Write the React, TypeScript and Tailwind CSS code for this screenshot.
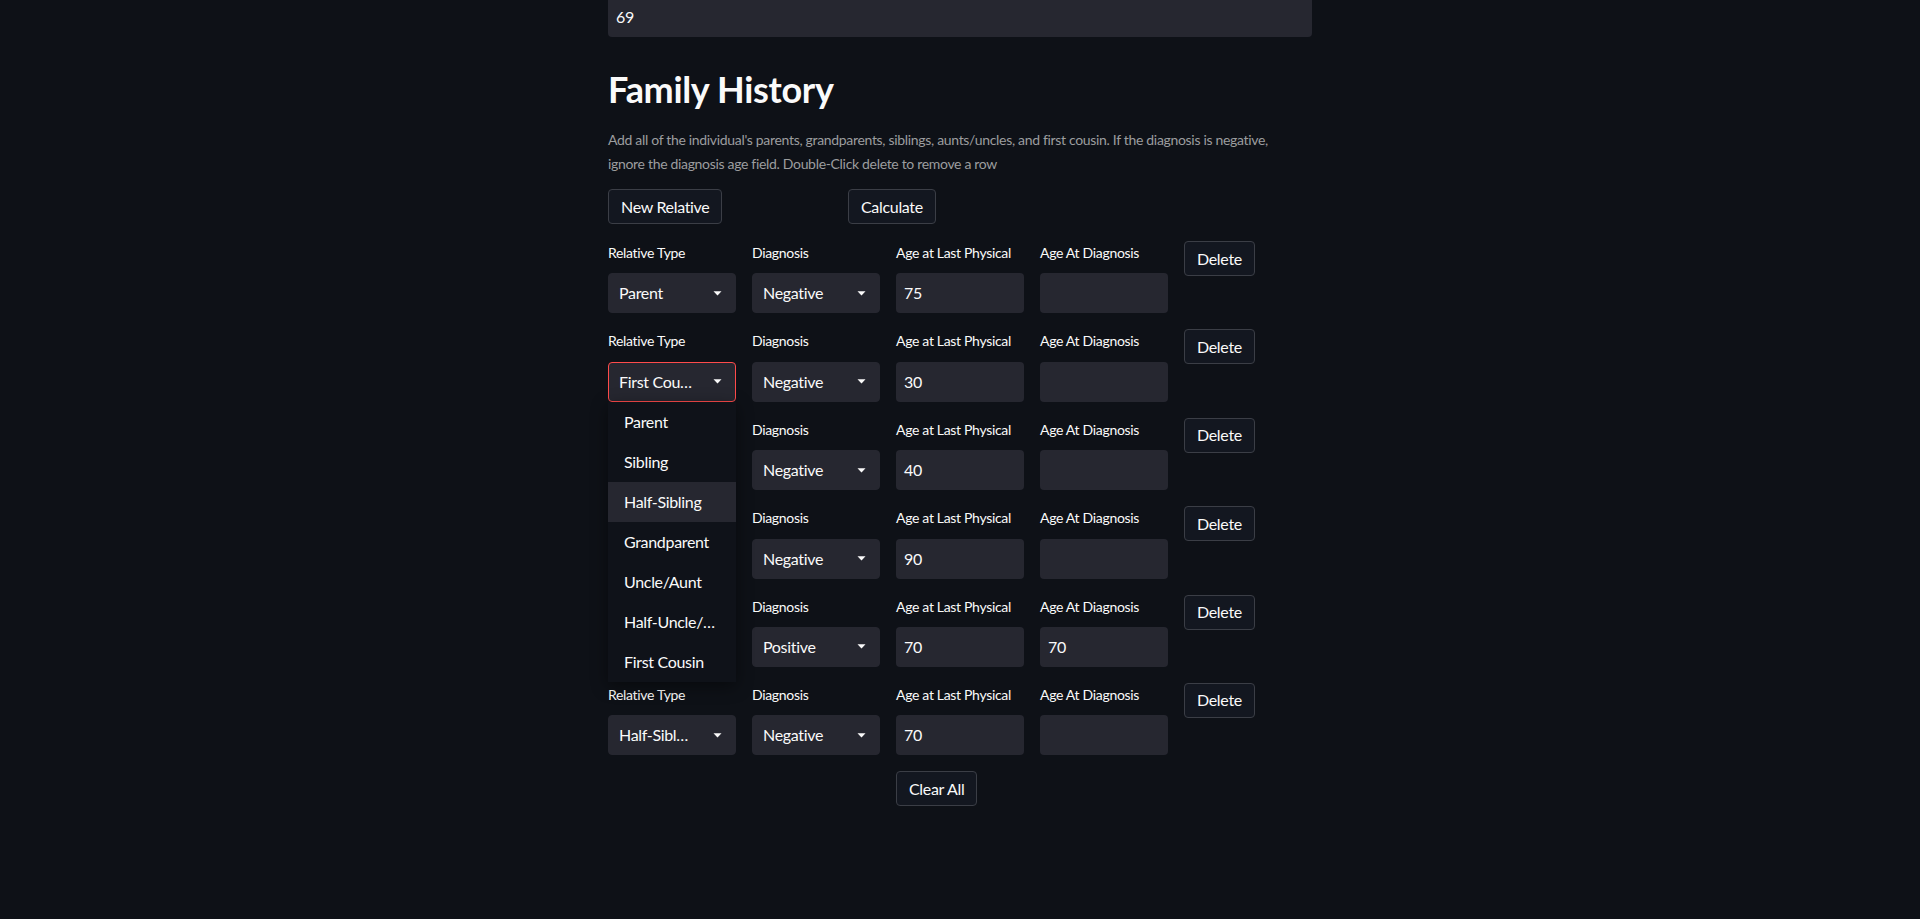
import React from "react";

type Row = {
  relative: string;
  diagnosis: string;
  lastPhysical: string;
  diagnosisAge: string;
  focused?: boolean;
  covered?: boolean;
};

const rows: Row[] = [
  { relative: "Parent", diagnosis: "Negative", lastPhysical: "75", diagnosisAge: "" },
  { relative: "First Cou…", diagnosis: "Negative", lastPhysical: "30", diagnosisAge: "", focused: true },
  { relative: "Sibling", diagnosis: "Negative", lastPhysical: "40", diagnosisAge: "", covered: true },
  { relative: "Grandparent", diagnosis: "Negative", lastPhysical: "90", diagnosisAge: "", covered: true },
  { relative: "Uncle/Aunt", diagnosis: "Positive", lastPhysical: "70", diagnosisAge: "70", covered: true },
  { relative: "Half-Sibl…", diagnosis: "Negative", lastPhysical: "70", diagnosisAge: "" },
];

const options = ["Parent", "Sibling", "Half-Sibling", "Grandparent", "Uncle/Aunt", "Half-Uncle/…", "First Cousin"];

const Caret = () => (
  <svg width="9" height="5" viewBox="0 0 9 5" className="shrink-0">
    <path d="M0.5 0.3h8L4.5 4.6z" fill="#fafafa" />
  </svg>
);

const Button = ({ label }: { label: string }) => (
  <button className="h-[35px] px-3 rounded-[4px] border border-[#3b3e46] bg-[#131720] text-[16px] text-[#fafafa] leading-none">
    {label}
  </button>
);

const Label = ({ text }: { text: string }) => (
  <div className="h-[32.4px] text-[14px] leading-6">{text}</div>
);

const Select = ({ value, focused, menu }: { value: string; focused?: boolean; menu?: boolean }) => (
  <div
    className={`relative h-10 rounded-[4px] bg-[#262730] border flex items-center pl-[10px] pr-[13px] ${
      focused ? "border-[#ff4b4b]" : "border-[#262730]"
    }`}
  >
    <span className="flex-1 truncate text-[16px]">{value}</span>
    <Caret />
    {menu && (
      <div className="absolute left-[-1px] top-[calc(100%+1px)] z-10 w-[128px] bg-[#0f1219] shadow-[0_4px_16px_rgba(0,0,0,0.45)]">
        {options.map((o) => (
          <div
            key={o}
            className={`h-10 flex items-center pl-4 text-[16px] whitespace-nowrap ${
              o === "Half-Sibling" ? "bg-[#262730]" : ""
            }`}
          >
            {o}
          </div>
        ))}
      </div>
    )}
  </div>
);

const Input = ({ value }: { value: string }) => (
  <div className="h-10 rounded-[4px] bg-[#262730] flex items-center pl-2 text-[16px]">{value}</div>
);

export default function App() {
  return (
    <div className="min-h-screen bg-[#0e1117] text-[#fafafa] font-['Lato',sans-serif] tracking-[-0.02em] overflow-hidden">
      <div className="mx-auto w-[704px] pb-20">
        <div className="-mt-[3px] h-10 rounded-[4px] bg-[#262730] flex items-center pl-2 text-[16px]">69</div>

        <h2 className="mt-[30px] text-[36px] font-bold leading-[44px]">Family History</h2>

        <p className="mt-[17px] text-[14px] leading-6 text-[#9c9d9f] whitespace-nowrap">
          Add all of the individual's parents, grandparents, siblings, aunts/uncles, and first cousin. If the diagnosis is negative,
          <br />
          ignore the diagnosis age field. Double-Click delete to remove a row
        </p>

        <div className="mt-[13px] grid grid-cols-3 gap-4">
          <div>
            <Button label="New Relative" />
          </div>
          <div>
            <Button label="Calculate" />
          </div>
          <div />
        </div>

        <div className="mt-[17px] flex flex-col gap-4">
          {rows.map((r, i) => (
            <div key={i} className="grid grid-cols-5 gap-4">
              <div>
                <Label text={r.covered ? "" : "Relative Type"} />
                <div className={r.covered ? "invisible" : ""}>
                  <Select value={r.relative} focused={r.focused} menu={r.focused} />
                </div>
              </div>
              <div>
                <Label text="Diagnosis" />
                <Select value={r.diagnosis} />
              </div>
              <div>
                <Label text="Age at Last Physical" />
                <Input value={r.lastPhysical} />
              </div>
              <div>
                <Label text="Age At Diagnosis" />
                <Input value={r.diagnosisAge} />
              </div>
              <div>
                <Button label="Delete" />
              </div>
            </div>
          ))}
        </div>

        <div className="mt-4 grid grid-cols-5 gap-4">
          <div />
          <div />
          <div>
            <Button label="Clear All" />
          </div>
        </div>
      </div>
    </div>
  );
}
